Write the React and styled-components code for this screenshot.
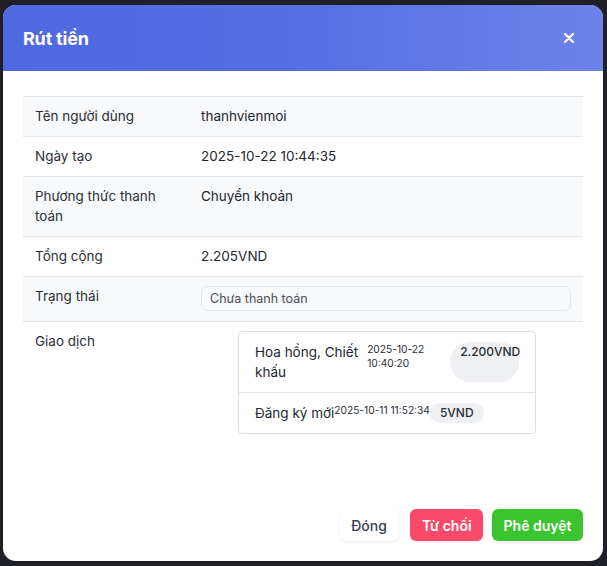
import styled, { createGlobalStyle } from "styled-components";

const GlobalStyle = createGlobalStyle`
  * { box-sizing: border-box; }
  body {
    margin: 0;
    background: #1f2025;
    font-family: Inter, "Noto Sans", sans-serif;
    color: #212529;
  }
`;

const details = [
  { label: "Tên người dùng", value: "thanhvienmoi" },
  { label: "Ngày tạo", value: "2025-10-22 10:44:35" },
  { label: "Phương thức thanh toán", value: "Chuyển khoản" },
  { label: "Tổng cộng", value: "2.205VND" },
];

const transactions = [
  { name: "Hoa hồng, Chiết khấu", date: "2025-10-22 10:40:20", amount: "2.200VND" },
  { name: "Đăng ký mới", date: "2025-10-11 11:52:34", amount: "5VND" },
];

function CloseIcon() {
  return (
    <svg width="10" height="10" viewBox="0 0 10 10">
      <path d="M1 1L9 9M9 1L1 9" stroke="#fff" strokeWidth="2.4" strokeLinecap="round" />
    </svg>
  );
}

function App() {
  return (
    <Page>
      <GlobalStyle />
      <Modal>
        <Header>
          <Title>Rút tiền</Title>
          <CloseButton aria-label="Đóng">
            <CloseIcon />
          </CloseButton>
        </Header>
        <Body>
          <DetailTable>
            {details.map((item, i) => (
              <Row key={item.label} striped={i % 2 === 0}>
                <Label>{item.label}</Label>
                <Value>{item.value}</Value>
              </Row>
            ))}
            <Row striped>
              <Label>Trạng thái</Label>
              <Value>
                <Status>Chưa thanh toán</Status>
              </Value>
            </Row>
            <Row>
              <Label>Giao dịch</Label>
              <Value>
                <TxList>
                  {transactions.map((tx) => (
                    <TxItem key={tx.name}>
                      <TxName>{tx.name}</TxName>
                      <TxDate>{tx.date}</TxDate>
                      <Amount>{tx.amount}</Amount>
                    </TxItem>
                  ))}
                </TxList>
              </Value>
            </Row>
          </DetailTable>
        </Body>
        <Footer>
          <Button variant="light">Đóng</Button>
          <Button variant="danger">Từ chối</Button>
          <Button variant="success">Phê duyệt</Button>
        </Footer>
      </Modal>
    </Page>
  );
}

const Page = styled.div`
  padding: 5px 4px 5px 3px;
  min-height: 566px;
`;

const Modal = styled.div`
  width: 600px;
  height: 556px;
  background: #fff;
  border-radius: 13px;
  overflow: hidden;
  display: flex;
  flex-direction: column;
`;

const Header = styled.div`
  height: 66px;
  flex-shrink: 0;
  display: flex;
  align-items: center;
  justify-content: space-between;
  padding: 0 22px 0 20px;
  background: linear-gradient(90deg, #4e68e1 0%, #5570e2 50%, #6c83ea 100%);
`;

const Title = styled.h2`
  margin: 0;
  color: #fff;
  font-size: 18px;
  font-weight: 700;
  letter-spacing: -0.2px;
`;

const CloseButton = styled.button`
  width: 24px;
  height: 24px;
  border: 0;
  padding: 0;
  background: transparent;
  display: flex;
  align-items: center;
  justify-content: center;
  cursor: pointer;
`;

const Body = styled.div`
  flex: 1;
  padding: 25px 20px 0;
`;

const DetailTable = styled.div`
  display: flex;
  flex-direction: column;
  font-size: 13.5px;
  line-height: 20px;
`;

const Row = styled.div`
  display: grid;
  grid-template-columns: 166px 1fr;
  border-top: 1px solid #e3e6ea;
  background: ${(p) => (p.striped ? "#f8f9fb" : "#fff")};
`;

const Label = styled.div`
  padding: 9px 12px 10px;
  color: #2b2f36;
`;

const Value = styled.div`
  padding: 9px 12px 10px;
  color: #23272e;
`;

const Status = styled.div`
  padding: 2px 8px;
  line-height: 19px;
  font-size: 12.5px;
  color: #4a4f57;
  background: #f8f9fb;
  border: 1px solid #e3e6ea;
  border-radius: 6px;
`;

const TxList = styled.div`
  width: 298px;
  margin: 0 0 0 37px;
  border: 1px solid #dcdfe4;
  border-radius: 4px;
`;

const TxItem = styled.div`
  display: flex;
  padding: 10px 16px;
  & + & {
    border-top: 1px solid #dcdfe4;
  }
`;

const TxName = styled.div`
  font-size: 13.5px;
  line-height: 20px;
  color: #23272e;
`;

const TxDate = styled.div`
  font-size: 10.2px;
  line-height: 14px;
  color: #2b2f36;
`;

const Amount = styled.div`
  min-width: 0;
  padding: 1px 10px;
  font-size: 12px;
  font-weight: 500;
  line-height: 18px;
  color: #2b2f36;
  background: #eef0f3;
  border-radius: 999px;
`;

const Footer = styled.div`
  display: flex;
  justify-content: flex-end;
  gap: 9px;
  padding: 0 20px 20px;
`;

const buttonColors = {
  light: { bg: "#fff", color: "#3a4150", shadow: "0 1px 3px rgba(0,0,0,0.08)" },
  danger: { bg: "#fb4a69", color: "#fff", shadow: "none" },
  success: { bg: "#3cc42e", color: "#fff", shadow: "none" },
};

const Button = styled.button`
  height: 32px;
  padding: 0 11.5px;
  border: 0;
  border-radius: 6px;
  font-family: inherit;
  font-size: 14px;
  font-weight: ${(p) => (p.variant === "light" ? 500 : 600)};
  background: ${(p) => buttonColors[p.variant].bg};
  color: ${(p) => buttonColors[p.variant].color};
  box-shadow: ${(p) => buttonColors[p.variant].shadow};
  margin-right: ${(p) => (p.variant === "light" ? "3px" : "0")};
  cursor: pointer;
`;

export default App;
